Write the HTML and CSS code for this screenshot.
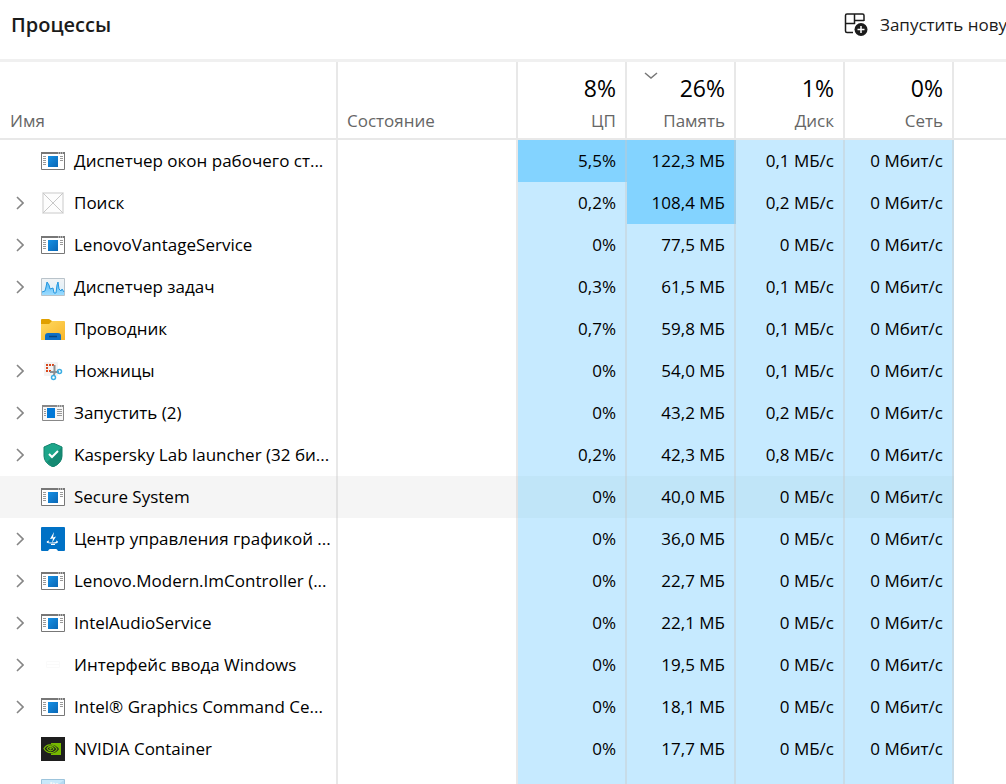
FILE: index.html
```html
<!DOCTYPE html>
<html lang="ru">
<head>
<meta charset="utf-8">
<title>Процессы</title>
<link rel="stylesheet" href="styles.css">
</head>
<body>
<svg class="defs" aria-hidden="true">
  <defs>
    <linearGradient id="blue" x1="0" y1="0" x2="1" y2="1"><stop offset="0" stop-color="#1591e6"/><stop offset="1" stop-color="#0a67b5"/></linearGradient>
    <linearGradient id="yellow" x1="0" y1="0" x2="1" y2="1"><stop offset="0" stop-color="#ffd95f"/><stop offset="1" stop-color="#f8b62b"/></linearGradient>
    <linearGradient id="sky" x1="0" y1="0" x2="0" y2="1"><stop offset="0" stop-color="#f1f3f5"/><stop offset="1" stop-color="#d8eefa"/></linearGradient>
    <linearGradient id="wave" x1="0" y1="0" x2="0" y2="1"><stop offset="0" stop-color="#55b8f5"/><stop offset="1" stop-color="#9cdcff"/></linearGradient>
    <symbol id="chevron" viewBox="0 0 8 14"><path d="M1 1l6 6-6 6" fill="none" stroke="#868686" stroke-width="1.6"/></symbol>
    <symbol id="app" viewBox="0 0 24 24">
      <path d="M.5 3.5h23v17H.5z" fill="#fff" stroke="#777"/>
      <path d="M0 3h24v2H0z" fill="#777"/>
      <path d="M17 4h1m1 0h1m1 0h1" stroke="#eee"/>
      <path d="M2 7.500h3m-3 2h3m-3 2h3m-3 2h3m-3 2h3M19 7.500h3m-3 2h3m-3 2h3" stroke="#999"/>
      <path d="M7 7h10v11H7z" fill="url(#blue)"/>
    </symbol>
    <symbol id="run" viewBox="0 0 24 24">
      <path d="M1.500 4.500h21v15h-21z" fill="#f7f7f7" stroke="#888"/>
      <path d="M1 4h22v2H1z" fill="#888"/>
      <path d="M16 5h1m1 0h1m1 0h1" stroke="#eee"/>
      <path d="M3 8.500h2m-2 2h2m-2 2h2m-2 2h2M16 8.500h5m-5 2h5m-5 2h5m-5 2h5" stroke="#999"/>
      <path d="M6 7h8v10H6z" fill="#0078d7"/>
    </symbol>
    <symbol id="blank" viewBox="0 0 24 24"><path d="M2 2h20v20H2z" fill="#fdfdfd" stroke="#dcdcdc" stroke-width="1.500"/><path d="M2 2l20 20M22 2L2 22" stroke="#c8c8c8"/></symbol>
    <symbol id="graph" viewBox="0 0 24 24">
      <path d="M.5 3.500h23v17H.5z" fill="url(#sky)" stroke="#b9c3ca"/>
      <path d="M1 17l3-1 1-4 1-5 2 3 1 4 3-1 1 5 2 0 1-8 1-3 1 7 2 2 1-2 2 3v3H1z" fill="url(#wave)"/>
      <path d="M1 17l3-1 1-4 1-5 2 3 1 4 3-1 1 5 2 0 1-8 1-3 1 7 2 2 1-2 2 3" fill="none" stroke="#2497df"/>
    </symbol>
    <symbol id="folder" viewBox="0 0 24 24">
      <path d="M0 3q0-1 1-1h7l3 2v5H0z" fill="#e0a000"/>
      <path d="M0 7h8l3-3h12q1 0 1 1v18H0z" fill="url(#yellow)"/>
      <path d="M4 23v-4q0-3 3-3h10q3 0 3 3v4z" fill="#0f6fc5"/>
      <path d="M8 19.500h8" stroke="#08457f" stroke-width="1.500"/>
    </symbol>
    <symbol id="snip" viewBox="0 0 24 24">
      <rect x="3" y="3" width="14" height="14" rx="1" fill="#f2f2f2"/>
      <path d="M5 5h2v2H5zm3 0h2v2H8zm3 0h2v2h-2zM5 8h2v2H5zm0 3h2v2H5zm3 0h2v2H8z" fill="#d9481c"/>
      <path d="M13.500 6v8l-1 3M9 13h7l2 0" fill="none" stroke="#8a8f93" stroke-width="2"/>
      <circle cx="18.500" cy="12.500" r="2" fill="none" stroke="#3aaee4" stroke-width="1.500"/>
      <circle cx="12.500" cy="18.500" r="2" fill="none" stroke="#3aaee4" stroke-width="1.500"/>
    </symbol>
    <symbol id="shield" viewBox="0 0 24 24">
      <path d="M12 0l9 4v9q0 7-9 11-9-4-9-11V4z" fill="#1da68a"/>
      <path d="M21 4v9q0 7-9 11l-6-5L19 6z" fill="#158a73"/>
      <path d="M12 0l9 4v9q0 7-9 11-9-4-9-11V4z" fill="none" stroke="#14826d"/>
      <path d="M8 11l3 3 6-6" fill="none" stroke="#fff" stroke-width="2"/>
    </symbol>
    <symbol id="intel" viewBox="0 0 24 24">
      <rect width="24" height="24" rx="1" fill="#0071c5"/>
      <path d="M13 5l-4 7 3-.5-1 4.500 4-6.500-3 1z" fill="#fff"/>
      <path d="M8 14c-3 1-2 2 3 2 5 0 7-1 4-2M10 17.500h4" fill="none" stroke="#fff" stroke-width="1.200"/>
      <path d="M7 24q1-2 2-2h6q1 0 2 2z" fill="#fff"/>
    </symbol>
    <symbol id="faint" viewBox="0 0 24 24"><path d="M5.500 8.500h13v6h-13zm0 3h13" fill="none" stroke="#fafafa"/></symbol>
    <symbol id="nvidia" viewBox="0 0 24 24">
      <path d="M0 0h24v24H0z" fill="#1e1e1e"/>
      <path d="M10 6h10v12H10z" fill="#76b900"/>
      <path d="M9 7.500c4 0 7 2 9 4.500-2 3-5 4.500-9 4.500z" fill="#1e1e1e"/>
      <path d="M3 11.500c3-5 9-5 13 .5-3 5-10 5-13-.5zM6 11.500c2-3 5-3 7 .5-2 2.500-5 2.500-7-.5z" fill="none" stroke="#76b900" stroke-width="1.200"/>
      <circle cx="9.500" cy="11.500" r="1.200" fill="#76b900"/>
    </symbol>
    <symbol id="service" viewBox="0 0 24 24">
      <path d="M.5.5h23v23H.5z" fill="#b5daf2" stroke="#9cc4dc"/>
      <path d="M1 1h22L1 18z" fill="#c9e9fa"/>
      <circle cx="11" cy="7" r="3" fill="none" stroke="#f4f8fa" stroke-width="2" stroke-dasharray="2 1"/>
      <circle cx="16" cy="5" r="1" fill="#f4f8fa"/>
    </symbol>
  </defs>
</svg>
<main class="page">
  <header class="toolbar">
    <h1 class="title">Процессы</h1>
    <button class="run-task" type="button">
      <svg class="run-icon" viewBox="0 0 24 24" aria-hidden="true">
        <path d="M9 19.500H3Q1.500 19.500 1.500 18V2.500Q1.500 1 3 1h15.500Q20 1 20 2.500V8M1.500 10.500h9V1M10.500 7.500H20" fill="none" stroke="#1b1b1b" stroke-width="1.500"/>
        <circle cx="17" cy="16.500" r="7.500" fill="#fff"/>
        <circle cx="17" cy="16.500" r="6.500" fill="#1b1b1b"/>
        <path d="M13.500 16.500h7M17 13v7" stroke="#fff" stroke-width="1.500"/>
      </svg>
      <span>Запустить новую задачу</span>
    </button>
  </header>
  <table class="processes">
    <colgroup><col class="col-name"><col class="col-state"><col class="col-num"><col class="col-num"><col class="col-num"><col class="col-num"><col></colgroup>
    <thead>
      <tr>
        <th scope="col">Имя</th>
        <th scope="col">Состояние</th>
        <th scope="col" class="num"><span class="total">8%</span>ЦП</th>
        <th scope="col" class="num" aria-sort="descending"><svg class="sort" viewBox="0 0 14 8" aria-hidden="true"><path d="M1 1l6 5 6-5" fill="none" stroke="#777" stroke-width="1.500"/></svg><span class="total">26%</span>Память</th>
        <th scope="col" class="num"><span class="total">1%</span>Диск</th>
        <th scope="col" class="num"><span class="total">0%</span>Сеть</th>
        <th></th>
      </tr>
    </thead>
    <tbody id="rows"></tbody>
  </table>
</main>
<script src="script.js"></script>
</body>
</html>
```

FILE: styles.css
```css
* { box-sizing: border-box; }
body {
  margin: 0;
  height: 100vh;
  overflow: hidden;
  background: #fff;
  color: #000;
  font: 17px/24px "Open Sans", "Noto Sans", sans-serif;
}
button { font: inherit; color: inherit; background: none; border: 0; padding: 0; }
.defs { position: absolute; width: 0; height: 0; }
.toolbar {
  display: flex;
  align-items: center;
  height: 62px;
  padding: 0 0 10px 11px;
  border-bottom: 3px solid #f0f0f0;
  color: #1b1b1b;
}
.title { flex: 1; margin: 0; font-size: 20px; font-weight: 600; line-height: 28px; }
.run-task {
  display: flex;
  align-items: center;
  gap: 12px;
  flex: 0 0 162px;
  overflow: hidden;
  white-space: nowrap;
}
.run-icon { flex: none; width: 24px; height: 24px; }
.processes { width: 100%; table-layout: fixed; border-collapse: separate; border-spacing: 0; }
.col-name { width: 338px; }
.col-state { width: 180px; }
.col-num { width: 109px; }
th, td { border-right: 2px solid rgba(200, 200, 200, .42); white-space: nowrap; overflow: hidden; }
th:last-child, td:last-child { border-right: 0; }
th {
  position: relative;
  height: 78px;
  padding: 0 9px 5px;
  border-bottom: 2px solid #e8e8e8;
  color: #666;
  font-weight: 400;
  text-align: left;
  vertical-align: bottom;
}
th:first-child { padding-left: 10px; }
.num { text-align: right; }
.total { display: block; margin-bottom: 7px; color: #000; font-size: 23px; line-height: 28px; }
.sort { position: absolute; left: 17px; top: 10px; width: 14px; height: 8px; }
td { height: 42px; padding: 0 9px; }
td.num { background: #c6eaff; }
td.high { background: #83d3ff; }
.name { display: flex; align-items: center; }
.expand { flex: none; width: 22px; height: 24px; margin-right: 10px; display: flex; align-items: center; justify-content: center; }
.chevron { width: 8px; height: 14px; }
.icon { width: 24px; height: 24px; margin-right: 9px; flex: none; }
.selected td { background: #f5f5f5; }
.selected td.num { background: #c0e5f8; }
.selected td:last-child { background: #fff; }
```

FILE: script.js
```js
const rows = [
  ["app", false, "Диспетчер окон рабочего ст...", "5,5%", "122,3 МБ", "0,1 МБ/с"],
  ["blank", true, "Поиск", "0,2%", "108,4 МБ", "0,2 МБ/с"],
  ["app", true, "LenovoVantageService", "0%", "77,5 МБ", "0 МБ/с"],
  ["graph", true, "Диспетчер задач", "0,3%", "61,5 МБ", "0,1 МБ/с"],
  ["folder", false, "Проводник", "0,7%", "59,8 МБ", "0,1 МБ/с"],
  ["snip", true, "Ножницы", "0%", "54,0 МБ", "0,1 МБ/с"],
  ["run", true, "Запустить (2)", "0%", "43,2 МБ", "0,2 МБ/с"],
  ["shield", true, "Kaspersky Lab launcher (32 би...", "0,2%", "42,3 МБ", "0,8 МБ/с"],
  ["app", false, "Secure System", "0%", "40,0 МБ", "0 МБ/с"],
  ["intel", true, "Центр управления графикой ...", "0%", "36,0 МБ", "0 МБ/с"],
  ["app", true, "Lenovo.Modern.ImController (...", "0%", "22,7 МБ", "0 МБ/с"],
  ["app", true, "IntelAudioService", "0%", "22,1 МБ", "0 МБ/с"],
  ["faint", true, "Интерфейс ввода Windows", "0%", "19,5 МБ", "0 МБ/с"],
  ["app", true, "Intel® Graphics Command Ce...", "0%", "18,1 МБ", "0 МБ/с"],
  ["nvidia", false, "NVIDIA Container", "0%", "17,7 МБ", "0 МБ/с"],
  ["service", false, "Служба поддержки б...", "", "", ""]
];

const html = rows.map(([icon, group, name, cpu, memory, disk]) => {
  const expand = group
    ? `<button class="expand" type="button" aria-label="Развернуть"><svg class="chevron"><use href="#chevron"/></svg></button>`
    : `<span class="expand"></span>`;
  const cpuHigh = cpu === "5,5%" ? " high" : "";
  const memoryHigh = parseFloat(memory) > 100 ? " high" : "";
  return `<tr${name === "Secure System" ? ' class="selected"' : ""}>
    <td><div class="name">${expand}<svg class="icon" aria-hidden="true"><use href="#${icon}"/></svg><span>${name}</span></div></td>
    <td></td>
    <td class="num${cpuHigh}">${cpu}</td>
    <td class="num${memoryHigh}">${memory}</td>
    <td class="num">${disk}</td>
    <td class="num">${disk ? "0 Мбит/с" : ""}</td>
    <td></td>
  </tr>`;
});
document.getElementById("rows").innerHTML = html.join("");
```
